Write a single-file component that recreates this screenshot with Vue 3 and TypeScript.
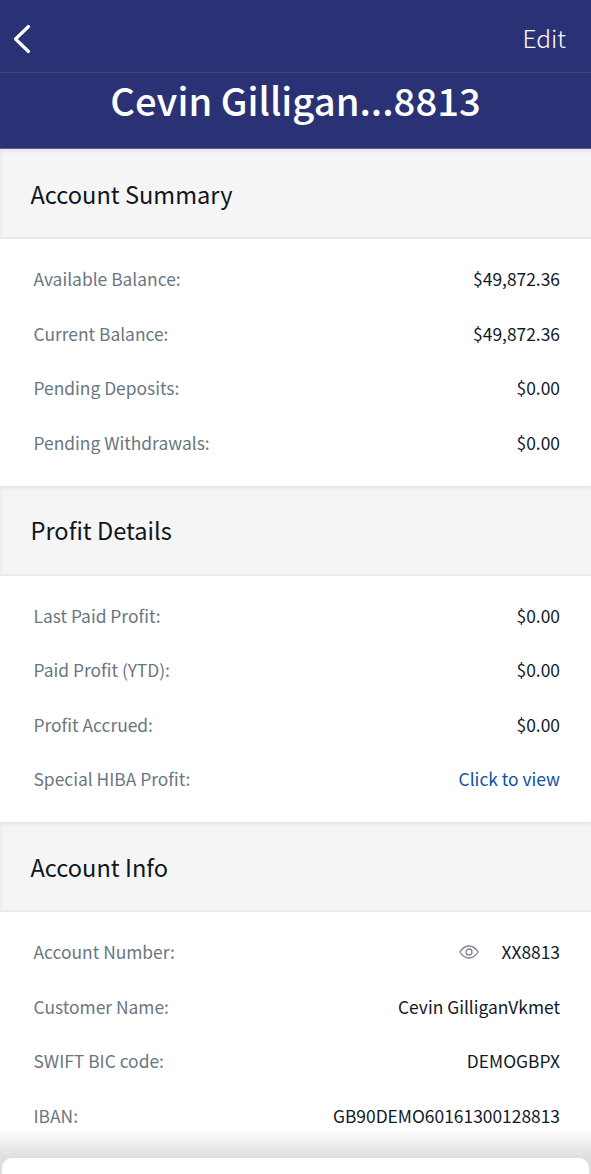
<script setup lang="ts">
interface Row { label: string; value: string; link?: boolean; eye?: boolean }
interface Section { title: string; rows: Row[] }
const sections: Section[] = [
  { title: 'Account Summary', rows: [
    { label: 'Available Balance:', value: '$49,872.36' },
    { label: 'Current Balance:', value: '$49,872.36' },
    { label: 'Pending Deposits:', value: '$0.00' },
    { label: 'Pending Withdrawals:', value: '$0.00' },
  ] },
  { title: 'Profit Details', rows: [
    { label: 'Last Paid Profit:', value: '$0.00' },
    { label: 'Paid Profit (YTD):', value: '$0.00' },
    { label: 'Profit Accrued:', value: '$0.00' },
    { label: 'Special HIBA Profit:', value: 'Click to view', link: true },
  ] },
  { title: 'Account Info', rows: [
    { label: 'Account Number:', value: 'XX8813', eye: true },
    { label: 'Customer Name:', value: 'Cevin GilliganVkmet' },
    { label: 'SWIFT BIC code:', value: 'DEMOGBPX' },
    { label: 'IBAN:', value: 'GB90DEMO60161300128813' },
  ] },
]
</script>

<template>
  <div class="screen">
    <header class="top">
      <div class="nav">
        <svg class="back" width="20" height="32" viewBox="0 0 20 32" aria-hidden="true">
          <path d="M16.5 3.5 L3.5 16 L16.5 28.5" fill="none" stroke="#fff" stroke-width="3.2" stroke-linecap="round" stroke-linejoin="round" />
        </svg>
        <span class="edit">Edit</span>
      </div>
      <h1 class="title">Cevin Gilligan...8813</h1>
    </header>
    <section v-for="s in sections" :key="s.title" class="section">
      <h2 class="head">{{ s.title }}</h2>
      <div class="list">
        <div v-for="r in s.rows" :key="r.label" class="row">
          <span class="label">{{ r.label }}</span>
          <span class="right">
            <svg v-if="r.eye" class="eye" width="20" height="14" viewBox="0 0 20 14" aria-hidden="true">
              <path d="M0.8 7 C3.6 2.8 6.7 1 10 1 C13.3 1 16.4 2.8 19.2 7 C16.4 11.2 13.3 13 10 13 C6.7 13 3.6 11.2 0.8 7 Z" fill="none" stroke="#7f8293" stroke-width="1.3" />
              <circle cx="10" cy="7" r="3" fill="none" stroke="#7f8293" stroke-width="1.3" />
            </svg>
            <span :class="r.link ? 'link' : 'value'">{{ r.value }}</span>
          </span>
        </div>
      </div>
    </section>
    <div class="fade"></div>
    <div class="sheet"></div>
  </div>
</template>

<style>
html, body { margin: 0; background: #fff; }
</style>

<style scoped>
.screen {
  position: relative;
  width: 591px;
  height: 1174px;
  overflow: hidden;
  background: #fff;
  font-family: "Noto Sans CJK SC", "Noto Sans", sans-serif;
}
.top {
  background: #2a3275;
  color: #fff;
  height: 148px;
  border-bottom: 1px solid #5a619b;
}
.nav {
  height: 73px;
  border-bottom: 1px solid #3c4482;
  display: flex;
  align-items: center;
  justify-content: space-between;
  padding: 5px 25px 0 12px;
  box-sizing: border-box;
}
.edit { font-size: 24.5px; font-weight: 300; line-height: 1; }
.title {
  margin: 0;
  height: 54px;
  display: flex;
  align-items: center;
  justify-content: center;
  font-size: 38.2px;
  font-weight: 500;
  line-height: 1;
}
.head {
  margin: 0;
  height: 90px;
  box-sizing: border-box;
  display: flex;
  align-items: center;
  padding: 3px 0 0 30.5px;
  background: #f5f5f6;
  border-bottom: 2px solid #e9eaee;
  box-shadow: inset 0 5px 5px -4px #dcdde2, inset 4px 0 4px -4px #e4e5e9;
  font-size: 23.6px;
  font-weight: 400;
  color: #0e1621;
  line-height: 1;
}
.list {
  height: 246.5px;
  box-sizing: border-box;
  padding: 12.5px 31px 0 33.5px;
}
.row {
  height: 54.5px;
  display: flex;
  align-items: center;
  justify-content: space-between;
  font-size: 17.4px;
  line-height: 1;
}
.label { color: #6a7681; }
.value { color: #111a27; }
.link { color: #0f4fa8; }
.right { display: flex; align-items: center; gap: 22px; }
.fade {
  position: absolute;
  left: 0;
  right: 0;
  top: 1128px;
  height: 46px;
  background: linear-gradient(to bottom, rgba(0, 0, 0, 0), rgba(0, 0, 0, 0.13) 65%);
}
.sheet {
  position: absolute;
  left: 2px;
  right: 2px;
  top: 1158px;
  bottom: 0;
  background: #fff;
  border-radius: 10px 10px 0 0;
}
</style>
